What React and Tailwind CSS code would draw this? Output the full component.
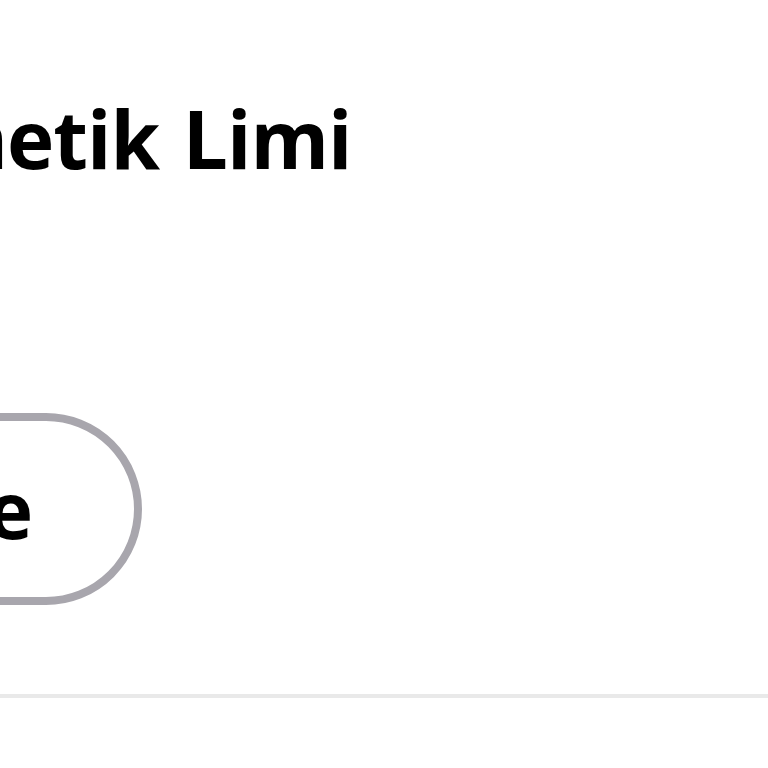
export default function App() {
  return (
    <div className="w-[768px] h-[768px] overflow-hidden bg-white flex flex-col" style={{ fontFamily: "'Open Sans', 'Noto Sans', sans-serif" }}>
      <div className="h-[83px]" />
      <h1 className="whitespace-nowrap text-[80px] leading-[110px] font-bold text-black -ml-[210px] tracking-[-1px] [word-spacing:4px] [font-variant-ligatures:none]">
        Kosmetik Limi
      </h1>
      <div className="h-[220px]" />
      <div className="flex">
        <button className="-ml-[200px] w-[342px] h-[192px] rounded-full border-[8px] border-[#a8a6ad] flex items-center justify-end pr-[101px] text-[78px] font-bold text-black whitespace-nowrap">
          Save
        </button>
      </div>
      <div className="h-[89px]" />
      <div className="h-[4px] bg-[#e9e9e9]" />
    </div>
  );
}
